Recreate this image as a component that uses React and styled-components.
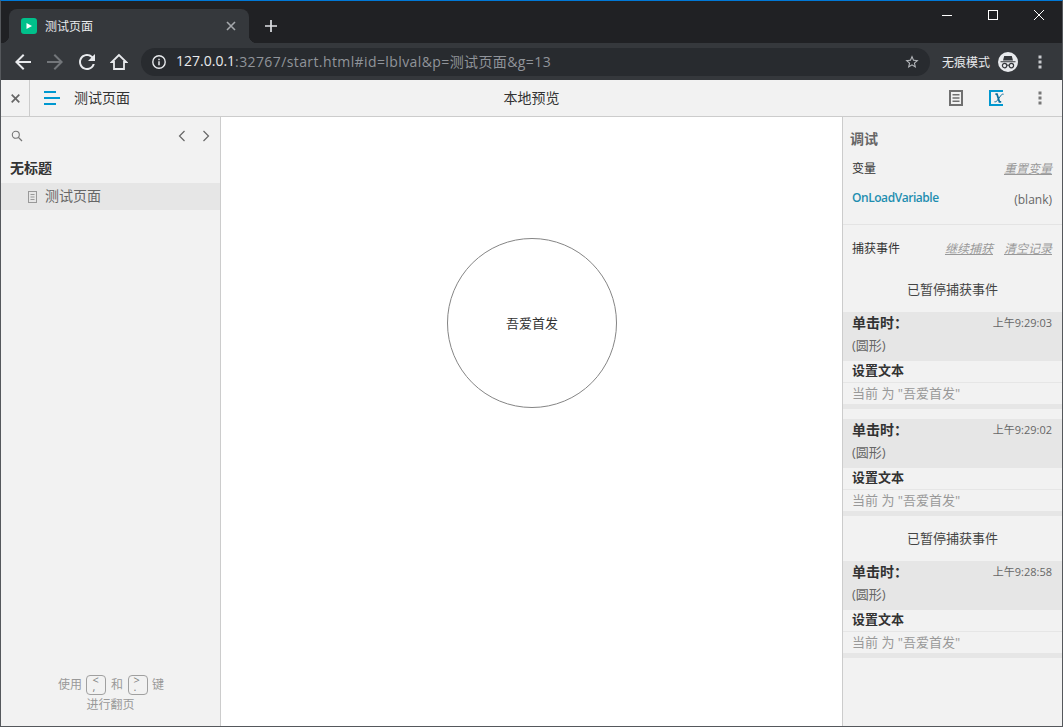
import React from "react";
import styled, { createGlobalStyle } from "styled-components";

const GlobalStyle = createGlobalStyle`
  html, body { margin: 0; padding: 0; background: #fff; }
  * { box-sizing: border-box; }
  body { font-family: "Open Sans", "Noto Sans CJK SC", sans-serif; }
`;

const Frame = styled.div`
  width: 1063px;
  height: 727px;
  display: flex;
  flex-direction: column;
  border-top: 1px solid #0078d7;
  border-left: 1px solid #55585c;
  border-right: 1px solid #55585c;
  border-bottom: 1px solid #55585c;
  overflow: hidden;
`;

const TitleBar = styled.div`
  height: 42px;
  flex: none;
  background: #202124;
  display: flex;
  align-items: flex-end;
  padding-left: 8px;
`;

const Tab = styled.div`
  position: relative;
  width: 240px;
  height: 34px;
  background: #35383c;
  border-radius: 8px 8px 0 0;
  display: flex;
  align-items: center;
  padding: 0 13px 0 12px;
  color: #e8eaed;
  font-size: 12px;
  &::before, &::after {
    content: "";
    position: absolute;
    bottom: 0;
    width: 8px;
    height: 8px;
  }
  &::before {
    left: -8px;
    background: radial-gradient(circle at 0 0, #202124 8px, #35383c 8.5px);
  }
  &::after {
    right: -8px;
    background: radial-gradient(circle at 100% 0, #202124 8px, #35383c 8.5px);
  }
`;

const Favicon = styled.div`
  width: 16px;
  height: 16px;
  border-radius: 3px;
  background: #00c08b;
  display: flex;
  align-items: center;
  justify-content: center;
  margin-right: 8px;
`;

const TabTitle = styled.span`
  flex: 1;
`;

const NewTab = styled.div`
  width: 30px;
  height: 34px;
  margin-left: 7px;
  margin-right: auto;
  display: flex;
  align-items: center;
  justify-content: center;
`;

const WindowControls = styled.div`
  align-self: flex-start;
  display: flex;
  height: 28px;
`;

const WindowButton = styled.div`
  width: 46px;
  height: 28px;
  display: flex;
  align-items: center;
  justify-content: center;
`;

const ChromeBar = styled.div`
  height: 37px;
  flex: none;
  background: #35383c;
  display: flex;
  align-items: center;
  padding-left: 6px;
  padding-right: 5px;
`;

const NavButton = styled.div`
  width: 32px;
  height: 32px;
  flex: none;
  display: flex;
  align-items: center;
  justify-content: center;
`;

const Omnibox = styled.div`
  width: 789px;
  height: 28px;
  margin-left: 6px;
  border-radius: 14px;
  background: #282b2f;
  display: flex;
  align-items: center;
  padding: 0 10px;
  font-size: 14px;
`;

const UrlHost = styled.span`
  color: #e8eaed;
  margin-left: 9px;
  padding-bottom: 2px;
`;

const UrlRest = styled.span`
  color: #90949a;
  flex: 1;
  padding-bottom: 2px;
  letter-spacing: 0.4px;
`;

const IncognitoLabel = styled.span`
  margin-left: 12px;
  color: #e8eaed;
  font-size: 12px;
  white-space: nowrap;
`;

const IncognitoBadge = styled.div`
  width: 20px;
  height: 20px;
  margin-left: 8px;
  border-radius: 50%;
  background: #e8eaed;
  display: flex;
  align-items: center;
  justify-content: center;
  flex: none;
`;

const ChromeMenu = styled.div`
  margin-left: 10px;
  width: 24px;
  display: flex;
  justify-content: center;
`;

const AppBar = styled.div`
  height: 37px;
  flex: none;
  background: #f2f2f2;
  border-bottom: 1px solid #cccccc;
  display: grid;
  grid-template-columns: 1fr auto 1fr;
  align-items: center;
  font-size: 14px;
  color: #333;
`;

const AppBarLeft = styled.div`
  height: 100%;
  display: flex;
  align-items: center;
`;

const AppBarText = styled.span`
  padding-bottom: 2px;
`;

const CloseCell = styled.div`
  width: 29px;
  height: 100%;
  border-right: 1px solid #cccccc;
  display: flex;
  align-items: center;
  justify-content: center;
`;

const MenuCell = styled.div`
  margin-left: 14px;
  margin-right: 14px;
  display: flex;
`;

const AppBarRight = styled.div`
  display: flex;
  align-items: center;
  justify-content: flex-end;
  padding-right: 20px;
`;

const ToolIcon = styled.div`
  width: ${(p) => p.$w || 16}px;
  margin-left: ${(p) => p.$ml || 0}px;
  display: flex;
  justify-content: center;
`;

const Body = styled.div`
  flex: 1;
  min-height: 0;
  display: flex;
`;

const Sidebar = styled.aside`
  width: 220px;
  flex: none;
  background: #f2f2f2;
  border-right: 1px solid #cccccc;
  display: flex;
  flex-direction: column;
`;

const SearchRow = styled.div`
  height: 38px;
  display: flex;
  align-items: center;
  padding: 0 6px 0 10px;
`;

const Pager = styled.div`
  margin-left: auto;
  display: flex;
  gap: 8px;
`;

const PagerButton = styled.div`
  width: 16px;
  display: flex;
  justify-content: center;
`;

const FolderTitle = styled.div`
  height: 28px;
  padding: 0 0 4px 9px;
  display: flex;
  align-items: center;
  font-size: 14px;
  font-weight: 700;
  color: #333;
`;

const PageItem = styled.div`
  height: 27px;
  background: #e6e6e6;
  display: flex;
  align-items: center;
  padding-left: 26px;
  font-size: 14px;
  color: #666;
  gap: 7px;
`;

const PageLabel = styled.span`
  padding-bottom: 3px;
`;

const Hint = styled.div`
  margin-top: auto;
  padding-bottom: 11px;
  text-align: center;
  color: #999;
  font-size: 12px;
  line-height: 20px;
`;

const HintLine = styled.div`
  display: flex;
  align-items: center;
  justify-content: center;
  gap: 4.5px;
  padding-left: 1px;
`;

const KeyCap = styled.span`
  width: 20px;
  height: 20px;
  border: 1px solid #a0a0a0;
  border-radius: 4px;
  display: inline-block;
  font-size: 11px;
  line-height: 7px;
  padding: 0 0 0 5px;
  text-align: left;
  color: #808080;
  white-space: pre;
`;

const Canvas = styled.main`
  flex: 1;
  background: #fff;
  padding: 121px 0 0 226px;
`;

const Circle = styled.div`
  width: 170px;
  height: 170px;
  border: 1px solid #858585;
  border-radius: 50%;
  display: flex;
  align-items: center;
  justify-content: center;
  padding-bottom: 2px;
  font-size: 13px;
  color: #333;
`;

const DebugPanel = styled.aside`
  width: 220px;
  flex: none;
  background: #f2f2f2;
  border-left: 1px solid #cccccc;
  display: flex;
  flex-direction: column;
`;

const PanelTitle = styled.div`
  height: 43px;
  padding: 14px 0 0 7px;
  font-size: 14px;
  font-weight: 700;
  color: #666;
  line-height: 16px;
`;

const PanelRow = styled.div`
  display: flex;
  justify-content: space-between;
  align-items: center;
  height: ${(p) => p.$h}px;
  padding: 0 10px 0 9px;
  font-size: 12px;
  color: #333;
`;

const PanelLinks = styled.div`
  display: flex;
  gap: 11px;
`;

const PanelLink = styled.span`
  font-style: italic;
  text-decoration: underline;
  color: #999;
`;

const VariableName = styled.span`
  color: #1e8eb0;
  font-weight: 600;
  letter-spacing: -0.45px;
  padding-top: 6px;
`;

const Blank = styled.span`
  color: #666;
  font-size: 12px;
  padding-top: 10px;
`;

const Divider = styled.div`
  height: 1px;
  background: #e4e4e4;
  margin-top: 12px;
`;

const Paused = styled.div`
  height: ${(p) => p.$h}px;
  display: flex;
  align-items: center;
  justify-content: center;
  padding-bottom: ${(p) => p.$pb}px;
  font-size: 13px;
  color: #444;
`;

const EventBlock = styled.div`
  margin-bottom: ${(p) => p.$mb || 0}px;
`;

const EventHeader = styled.div`
  height: 49px;
  background: #e6e6e6;
  padding: 0 10px 0 9px;
`;

const EventTop = styled.div`
  display: flex;
  justify-content: space-between;
  align-items: center;
  height: 20px;
`;

const EventName = styled.span`
  font-size: 14px;
  font-weight: 700;
  color: #333;
`;

const EventTime = styled.span`
  font-size: 11px;
  color: #666;
`;

const EventTarget = styled.div`
  margin-top: 2px;
  font-size: 13px;
  line-height: 22px;
  color: #666;
`;

const ActionName = styled.div`
  height: 22px;
  padding: 0 0 4px 9px;
  border-bottom: 1px solid #e6e6e6;
  display: flex;
  align-items: center;
  font-size: 13px;
  font-weight: 700;
  color: #333;
`;

const ActionDetail = styled.div`
  height: 21px;
  padding: 0 0 3px 9px;
  display: flex;
  align-items: center;
  font-size: 13px;
  color: #999;
`;

const EventFoot = styled.div`
  height: 5px;
  background: #e6e6e6;
`;

const Dots = ({ color }) => (
  <svg width="4" height="14" viewBox="0 0 4 14">
    <rect x="0.5" y="0.5" width="3" height="3" fill={color} />
    <rect x="0.5" y="5.5" width="3" height="3" fill={color} />
    <rect x="0.5" y="10.5" width="3" height="3" fill={color} />
  </svg>
);

const IconPath = ({ d, fill, flip }) => (
  <svg width="24" height="24" viewBox="0 0 24 24" transform={flip ? "scale(-1 1)" : undefined}>
    <path d={d} fill={fill} />
  </svg>
);

const EventItem = ({ time, mb }) => (
  <EventBlock $mb={mb}>
    <EventHeader>
      <EventTop>
        <EventName>单击时：</EventName>
        <EventTime>{time}</EventTime>
      </EventTop>
      <EventTarget>(圆形)</EventTarget>
    </EventHeader>
    <ActionName>设置文本</ActionName>
    <ActionDetail>当前 为 "吾爱首发"</ActionDetail>
    <EventFoot />
  </EventBlock>
);

const arrow = "M20 11H7.83l5.59-5.59L12 4l-8 8 8 8 1.41-1.41L7.83 13H20v-2z";

export default function App() {
  return (
    <Frame>
      <GlobalStyle />
      <TitleBar>
        <Tab>
          <Favicon>
            <svg width="8" height="8" viewBox="0 0 8 8">
              <path d="M1.5 1v6L7 4z" fill="#fff" />
            </svg>
          </Favicon>
          <TabTitle>测试页面</TabTitle>
          <svg width="10" height="10" viewBox="0 0 10 10">
            <path d="M1 1l8 8M9 1l-8 8" stroke="#a5a8ac" strokeWidth="1.6" />
          </svg>
        </Tab>
        <NewTab>
          <svg width="12" height="12" viewBox="0 0 12 12">
            <path d="M6 0v12M0 6h12" stroke="#dfe1e5" strokeWidth="1.7" />
          </svg>
        </NewTab>
        <WindowControls>
          <WindowButton>
            <svg width="10" height="10" viewBox="0 0 10 10">
              <path d="M0 5.5h10" stroke="#fff" />
            </svg>
          </WindowButton>
          <WindowButton>
            <svg width="10" height="10" viewBox="0 0 10 10">
              <rect x="0.5" y="0.5" width="9" height="9" fill="none" stroke="#fff" />
            </svg>
          </WindowButton>
          <WindowButton>
            <svg width="10" height="10" viewBox="0 0 10 10">
              <path d="M0 0l10 10M10 0L0 10" stroke="#fff" />
            </svg>
          </WindowButton>
        </WindowControls>
      </TitleBar>

      <ChromeBar>
        <NavButton>
          <IconPath d={arrow} fill="#e8eaed" />
        </NavButton>
        <NavButton>
          <IconPath d={arrow} fill="#73767a" flip />
        </NavButton>
        <NavButton>
          <IconPath
            d="M17.65 6.35A7.958 7.958 0 0 0 12 4c-4.42 0-7.99 3.58-7.99 8s3.57 8 7.99 8c3.73 0 6.84-2.55 7.73-6h-2.08A5.99 5.99 0 0 1 12 18c-3.31 0-6-2.69-6-6s2.69-6 6-6c1.66 0 3.14.69 4.22 1.78L13 11h7V4l-2.35 2.35z"
            fill="#e8eaed"
          />
        </NavButton>
        <NavButton>
          <svg width="18" height="18" viewBox="0 0 18 18">
            <path d="M9 2L1.8 9H4v7h10V9h2.2z" fill="none" stroke="#e8eaed" strokeWidth="1.8" strokeLinejoin="miter" />
          </svg>
        </NavButton>
        <Omnibox>
          <svg width="16" height="16" viewBox="0 0 16 16">
            <circle cx="8" cy="8" r="6.2" fill="none" stroke="#e8eaed" strokeWidth="1.4" />
            <path d="M8 7.2v4M8 4.8v1.4" stroke="#e8eaed" strokeWidth="1.5" />
          </svg>
          <UrlHost>127.0.0.1</UrlHost>
          <UrlRest>:32767/start.html#id=lblval&amp;p=测试页面&amp;g=13</UrlRest>
          <svg width="16" height="16" viewBox="0 0 24 24">
            <path
              d="M22 9.24l-7.19-.62L12 2 9.19 8.63 2 9.24l5.46 4.73L5.82 21 12 17.27 18.18 21l-1.63-7.03L22 9.24zM12 15.4l-3.76 2.27 1-4.28-3.32-2.88 4.38-.38L12 6.1l1.71 4.04 4.38.38-3.32 2.88 1 4.28L12 15.4z"
              fill="#b4b7bb"
            />
          </svg>
        </Omnibox>
        <IncognitoLabel>无痕模式</IncognitoLabel>
        <IncognitoBadge>
          <svg width="16" height="14" viewBox="0 0 16 14">
            <path d="M0.5 6.2h15v1H0.5zM3 5.6L4.2 1h7.6L13 5.6z" fill="#35383c" />
            <circle cx="4.6" cy="10.6" r="2.2" fill="none" stroke="#35383c" strokeWidth="1.2" />
            <circle cx="11.4" cy="10.6" r="2.2" fill="none" stroke="#35383c" strokeWidth="1.2" />
            <path d="M6.8 10.2h2.4" stroke="#35383c" />
          </svg>
        </IncognitoBadge>
        <ChromeMenu>
          <Dots color="#c9cbcf" />
        </ChromeMenu>
      </ChromeBar>

      <AppBar>
        <AppBarLeft>
          <CloseCell>
            <svg width="9" height="9" viewBox="0 0 9 9">
              <path d="M.7.7l7.6 7.6M8.3.7L.7 8.3" stroke="#666" strokeWidth="1.7" />
            </svg>
          </CloseCell>
          <MenuCell>
            <svg width="16" height="14" viewBox="0 0 16 14">
              <path d="M0 0h12v2H0zM0 6h16v2H0zM0 12h12v2H0z" fill="#0098d0" />
            </svg>
          </MenuCell>
          <AppBarText>测试页面</AppBarText>
        </AppBarLeft>
        <AppBarText>本地预览</AppBarText>
        <AppBarRight>
          <ToolIcon $w={14}>
            <svg width="14" height="16" viewBox="0 0 14 16">
              <path d="M0 0h14v16H0z" fill="#707070" />
              <path d="M2 2h10v12H2z" fill="#f2f2f2" />
              <path d="M3.5 4h7v1.5h-7zM3.5 7.2h7v1.5h-7zM3.5 10.4h7v1.5h-7z" fill="#707070" />
            </svg>
          </ToolIcon>
          <ToolIcon $w={16} $ml={26}>
            <svg width="16" height="16" viewBox="0 0 16 16">
              <path d="M14 1H1v14h13" fill="none" stroke="#0098d0" strokeWidth="2" />
              <path d="M6.4 4.2h1.6l2.4 7.6h1.8" fill="none" stroke="#0a6f9e" strokeWidth="1.7" />
              <path d="M14.6 4.2c-1.2-.3-2 .2-2.8 1.4l-3.6 5c-.7 1-1.5 1.4-2.8 1.2" fill="none" stroke="#0a6f9e" strokeWidth="1" />
            </svg>
          </ToolIcon>
          <ToolIcon $w={4} $ml={33}>
            <Dots color="#777" />
          </ToolIcon>
        </AppBarRight>
      </AppBar>

      <Body>
        <Sidebar>
          <SearchRow>
            <svg width="12" height="12" viewBox="0 0 12 12">
              <circle cx="4.8" cy="4.8" r="3.5" fill="none" stroke="#777" strokeWidth="1.1" />
              <path d="M7.4 7.4l3.6 3.6" stroke="#777" strokeWidth="1.3" />
            </svg>
            <Pager>
              <PagerButton>
                <svg width="8" height="12" viewBox="0 0 8 12">
                  <path d="M6.5 1L1.5 6l5 5" fill="none" stroke="#666" strokeWidth="1.2" />
                </svg>
              </PagerButton>
              <PagerButton>
                <svg width="8" height="12" viewBox="0 0 8 12">
                  <path d="M1.5 1l5 5-5 5" fill="none" stroke="#666" strokeWidth="1.2" />
                </svg>
              </PagerButton>
            </Pager>
          </SearchRow>
          <FolderTitle>无标题</FolderTitle>
          <PageItem>
            <svg width="11" height="12" viewBox="0 0 11 12">
              <rect x="1.5" y="0.5" width="8" height="11" fill="none" stroke="#999" />
              <path d="M3.5 3.5h4M3.5 6h4M3.5 8.5h4" stroke="#999" />
            </svg>
            <PageLabel>测试页面</PageLabel>
          </PageItem>
          <Hint>
            <HintLine>
              使用 <KeyCap>{"<\n,"}</KeyCap> 和 <KeyCap>{">\n."}</KeyCap> 键
            </HintLine>
            进行翻页
          </Hint>
        </Sidebar>

        <Canvas>
          <Circle>吾爱首发</Circle>
        </Canvas>

        <DebugPanel>
          <PanelTitle>调试</PanelTitle>
          <PanelRow $h={16}>
            <span>变量</span>
            <PanelLink>重置变量</PanelLink>
          </PanelRow>
          <PanelRow $h={36}>
            <VariableName>OnLoadVariable</VariableName>
            <Blank>(blank)</Blank>
          </PanelRow>
          <Divider />
          <PanelRow $h={46}>
            <span>捕获事件</span>
            <PanelLinks>
              <PanelLink>继续捕获</PanelLink>
              <PanelLink>清空记录</PanelLink>
            </PanelLinks>
          </PanelRow>
          <Paused $h={41} $pb={6}>已暂停捕获事件</Paused>
          <EventItem time="上午9:29:03" mb={10} />
          <EventItem time="上午9:29:02" />
          <Paused $h={45} $pb={2}>已暂停捕获事件</Paused>
          <EventItem time="上午9:28:58" />
        </DebugPanel>
      </Body>
    </Frame>
  );
}
